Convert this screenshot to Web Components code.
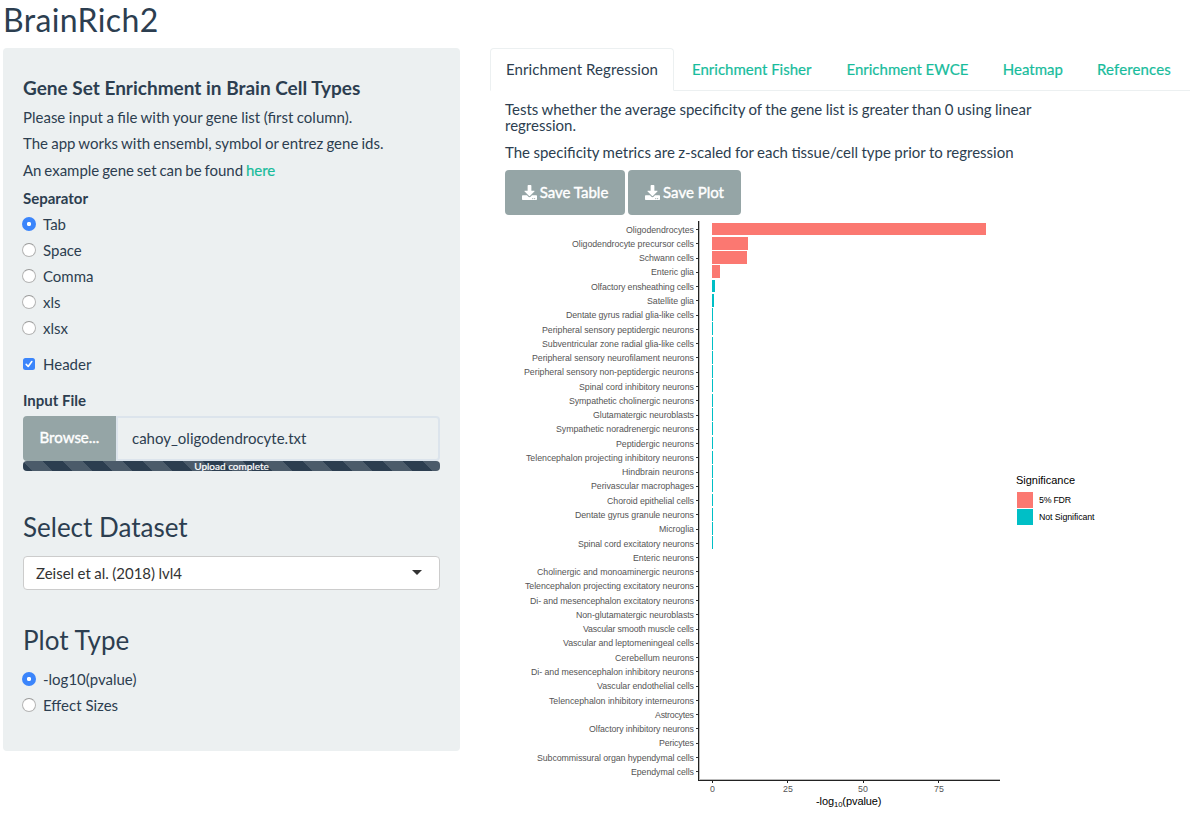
<!DOCTYPE html>
<html lang="en">
<head>
<meta charset="utf-8">
<title>BrainRich2</title>
<style>
body{margin:0;background:#fff;color:#2c3e50;font:15px/16px Lato,"Open Sans",sans-serif;overflow:hidden}
</style>
</head>
<body>
<brain-app></brain-app>
<script>
const define = (name, html, setup) => {
  const t = document.createElement('template');
  t.innerHTML = html;
  customElements.define(name, class extends HTMLElement {
    constructor() {
      super();
      this.attachShadow({mode: 'open'}).append(t.content.cloneNode(true));
    }
    connectedCallback() { if (setup) setup(this, this.shadowRoot); }
  });
};

define('choice-item', `
<style>
:host{display:flex;align-items:center;height:26px;line-height:21px}
i{box-sizing:border-box;width:14px;height:14px;margin:0 7px 0 -1px;border-radius:50%;background:#fff;border:1px solid #b4b4b4;border-top-color:#999;flex:none;display:block}
:host([checked]) i{border:0;background:radial-gradient(circle,#fff 0 1.8px,#3b85fb 2.5px)}
:host([kind=check]) i{width:12px;height:12px;margin:0 8px 0 0;border:0;border-radius:2.5px;background:#3b85fb}
svg{display:none}
:host([kind=check]) svg{display:block}
</style>
<i><svg width="12" height="12" viewBox="0 0 12 12" fill="none" stroke="#fff" stroke-width="1.6" stroke-linecap="round" stroke-linejoin="round"><path d="M3.2 6.4 5.2 8.5 8.8 3.5"/></svg></i><span><slot></slot></span>`);

define('file-input', `
<style>
:host{display:block}
.row{display:flex;height:45px}
.btn{box-sizing:border-box;width:93px;background:#95a5a6;color:#fff;border-radius:4px 0 0 4px;text-align:center;line-height:43px;-webkit-text-stroke:.4px #fff}
.name{box-sizing:border-box;flex:1;border:2px solid #dce4ec;border-radius:0 4px 4px 0;padding-left:14px;line-height:40px}
.bar{height:10px;border-radius:4px;background:linear-gradient(45deg,rgba(255,255,255,.15) 25%,transparent 25%,transparent 50%,rgba(255,255,255,.15) 50%,rgba(255,255,255,.15) 75%,transparent 75%) 0 0/40px 40px #2c3e50;color:#fff;font-size:10px;line-height:11px;text-align:center;overflow:hidden;-webkit-text-stroke:.2px #fff}
</style>
<div class="row"><div class="btn">Browse...</div><div class="name">cahoy_oligodendrocyte.txt</div></div>
<div class="bar">Upload complete</div>`);

define('select-box', `
<style>
:host{box-sizing:border-box;display:flex;align-items:center;justify-content:space-between;height:34px;border:1px solid #ccc;border-radius:4px;background:#fff;color:#333;padding:0 17px 1px 12px;word-spacing:-.4px}
i{border:5px solid transparent;border-top-color:#333;border-bottom:0;margin-top:-1px}
</style>
<slot></slot><i></i>`);

define('side-panel', `
<style>
:host{box-sizing:border-box;display:block;width:457px;height:703px;background:#ecf0f1;border-radius:4px;padding:29px 20px 0}
h4{font-size:19px;line-height:21px;margin:0 0 11px}
p{margin:0 0 10px}
a{color:#18bc9c;-webkit-text-stroke:.2px #18bc9c}
h3{font-weight:400;font-size:26px;line-height:28px;margin:0}
b{display:block}
</style>
<h4>Gene Set Enrichment in Brain Cell Types</h4>
<p style="word-spacing:-.35px">Please input a file with your gene list (first column).</p>
<p style="margin-bottom:11px;word-spacing:-.65px">The app works with ensembl, symbol or entrez gene ids.</p>
<p style="word-spacing:-1px">An example gene set can be found <a>here</a></p>
<b style="margin:12px 0 5px">Separator</b>
<choice-item checked>Tab</choice-item>
<choice-item>Space</choice-item>
<choice-item>Comma</choice-item>
<choice-item>xls</choice-item>
<choice-item>xlsx</choice-item>
<choice-item kind="check" style="margin-top:10px">Header</choice-item>
<b style="margin:15px 0 8px">Input File</b>
<file-input></file-input>
<h3 style="margin:42px 0 15px">Select Dataset</h3>
<select-box>Zeisel et al. (2018) lvl4</select-box>
<h3 style="margin:36px 0 12px">Plot Type</h3>
<choice-item checked>-log10(pvalue)</choice-item>
<choice-item>Effect Sizes</choice-item>`);

define('tab-item', `
<style>
:host{box-sizing:border-box;display:block;height:43px;padding:13px 16px 0;margin-right:2px;color:#18bc9c;-webkit-text-stroke:.2px #18bc9c;border-bottom:1px solid #ecf0f1;line-height:16px;white-space:nowrap}
:host([active]){color:#2c3e50;-webkit-text-stroke:0;border:1px solid #ecf0f1;border-bottom-color:#fff;border-radius:4px 4px 0 0;padding:12px 15px 0;letter-spacing:.08px}
</style><slot></slot>`);

define('tab-bar', `
<style>
:host{display:flex;height:43px;background:linear-gradient(#ecf0f1,#ecf0f1) 0 42px/100% 1px no-repeat}
</style><slot></slot>`);

define('save-button', `
<style>
:host{box-sizing:border-box;display:flex;align-items:center;justify-content:center;gap:3px;height:45px;border-radius:4px;background:#95a5a6;color:#fff;-webkit-text-stroke:.4px #fff}
svg{display:block}
span{padding-bottom:2px}
</style>
<svg width="15" height="15" viewBox="0 0 512 512" fill="#fff" stroke="none"><path d="M216 0h80c13.300 0 24 10.700 24 24v168h87.700c17.800 0 26.700 21.500 14.100 34.100L269.700 378.300c-7.500 7.500-19.800 7.500-27.300 0L90.100 226.100c-12.600-12.600-3.700-34.100 14.100-34.100H192V24c0-13.300 10.700-24 24-24zm296 376v112c0 13.300-10.700 24-24 24H24c-13.300 0-24-10.700-24-24V376c0-13.300 10.700-24 24-24h146.700l49 49c20.100 20.100 52.500 20.100 72.600 0l49-49H488c13.300 0 24 10.700 24 24zm-124 88c0-11-9-20-20-20s-20 9-20 20 9 20 20 20 20-9 20-20zm64 0c0-11-9-20-20-20s-20 9-20 20 9 20 20 20 20-9 20-20z"/></svg><span><slot></slot></span>`);

// Each row: cell type, label width, bar width.
const rows = [
  ['Oligodendrocytes',68,274],['Oligodendrocyte precursor cells',122,36],['Schwann cells',55,35],['Enteric glia',43,8],
  ['Olfactory ensheathing cells',103,3],['Satellite glia',47,2],['Dentate gyrus radial glia-like cells',128,1],
  ['Peripheral sensory peptidergic neurons',152,1],['Subventricular zone radial glia-like cells',152,1],
  ['Peripheral sensory neurofilament neurons',162,1],['Peripheral sensory non-peptidergic neurons',170,1],
  ['Spinal cord inhibitory neurons',115,1],['Sympathetic cholinergic neurons',125,1],['Glutamatergic neuroblasts',101,1],
  ['Sympathetic noradrenergic neurons',138,1],['Peptidergic neurons',78,1],['Telencephalon projecting inhibitory neurons',168,1],
  ['Hindbrain neurons',72,1],['Perivascular macrophages',103,1],['Choroid epithelial cells',87,1],
  ['Dentate gyrus granule neurons',119,1],['Microglia',35,1],['Spinal cord excitatory neurons',116,1],
  ['Enteric neurons',61,0],['Cholinergic and monoaminergic neurons',157,0],['Telencephalon projecting excitatory neurons',169,0],
  ['Di- and mesencephalon excitatory neurons',164,0],['Non-glutamatergic neuroblasts',118,0],['Vascular smooth muscle cells',111,0],
  ['Vascular and leptomeningeal cells',131,0],['Cerebellum neurons',79,0],['Di- and mesencephalon inhibitory neurons',163,0],
  ['Vascular endothelial cells',97,0],['Telencephalon inhibitory interneurons',145,0],['Astrocytes',39,0],
  ['Olfactory inhibitory neurons',105,0],['Pericytes',35,0],['Subcommissural organ hypendymal cells',157,0],['Ependymal cells',63,0]
];

define('enrichment-plot', `
<style>
:host{display:block}
svg{display:block;font-family:"Liberation Sans",Arial,sans-serif}
.lab{font-size:8.8px;fill:#555}
.ttl{font-size:11px;fill:#000}
.key{font-size:8.8px;fill:#000}
</style>
<svg width="685" height="598" viewBox="505 215 685 598">
<g id="plot"></g>
<path fill="#bbb" shape-rendering="crispEdges" d="M699 221h1v558h-1zM699 779h301v1H699z"/>
<g fill="#222" shape-rendering="crispEdges"><path d="M698 221h1v560h-1zM698 780h302v1H698z"/><path d="M712 781h1v2h-1zM787 781h1v2h-1zM863 781h1v2h-1zM938 781h1v2h-1z"/></g>
<g class="lab" text-anchor="middle"><text x="712.500" y="792">0</text><text x="788" y="792">25</text><text x="863" y="792">50</text><text x="939" y="792">75</text></g>
<text class="ttl" x="816" y="805" textLength="65.500">-log<tspan font-size="7.700" dy="2">10</tspan><tspan dy="-2">(pvalue)</tspan></text>
<text class="ttl" x="1016" y="484" textLength="59">Significance</text>
<g shape-rendering="crispEdges"><path fill="#fb7871" d="M1017 492h16v16h-16z"/><path fill="#00bfc6" d="M1017 509h16v16h-16z"/></g>
<text class="key" x="1039" y="503" textLength="32">5% FDR</text>
<text class="key" x="1039" y="520" textLength="55.500">Not Significant</text>
</svg>`, (host, root) => {
  root.getElementById('plot').innerHTML = rows.map(([name, w, v], i) => {
    const y = 223 + 14.27 * i, top = Math.floor(y + .02), h = Math.floor(y + 12.85) - top;
    return `<text class="lab" x="${694 - w}" y="${Math.round(y + 9.62)}" textLength="${w}">${name}</text>` +
      `<rect x="696" y="${Math.round(y + 6)}" width="2" height="1" fill="#333" shape-rendering="crispEdges"/>` +
      (v ? `<rect x="712" y="${top}" width="${v}" height="${h}" fill="${i < 4 ? '#fb7871' : '#00bfc6'}" shape-rendering="crispEdges"/>` : '');
  }).join('');
});

define('brain-app', `
<style>
:host{display:block;padding:2px 0 0 3px}
h2{font-weight:400;font-size:32px;line-height:35px;margin:0 0 11px;letter-spacing:.35px}
.cols{display:grid;grid-template-columns:457px 1fr;gap:30px}
.body{padding:10px 0 0 15px}
p{margin:0 0 11px;width:560px}
.btns{display:flex;gap:3px}
</style>
<h2>BrainRich2</h2>
<div class="cols">
<side-panel></side-panel>
<main>
<tab-bar><tab-item active>Enrichment Regression</tab-item><tab-item style="margin-right:3px">Enrichment Fisher</tab-item><tab-item style="margin-right:2.500px">Enrichment EWCE</tab-item><tab-item>Heatmap</tab-item><tab-item style="letter-spacing:.15px">References</tab-item></tab-bar>
<div class="body">
<p style="word-spacing:-.4px">Tests whether the average specificity of the gene list is greater than 0 using linear regression.</p>
<p style="margin-bottom:10px;word-spacing:-.4px">The specificity metrics are z-scaled for each tissue/cell type prior to regression</p>
<div class="btns"><save-button style="width:120px">Save Table</save-button><save-button style="width:113px">Save Plot</save-button></div>
<enrichment-plot></enrichment-plot>
</div>
</main>
</div>`);
</script>
</body>
</html>
